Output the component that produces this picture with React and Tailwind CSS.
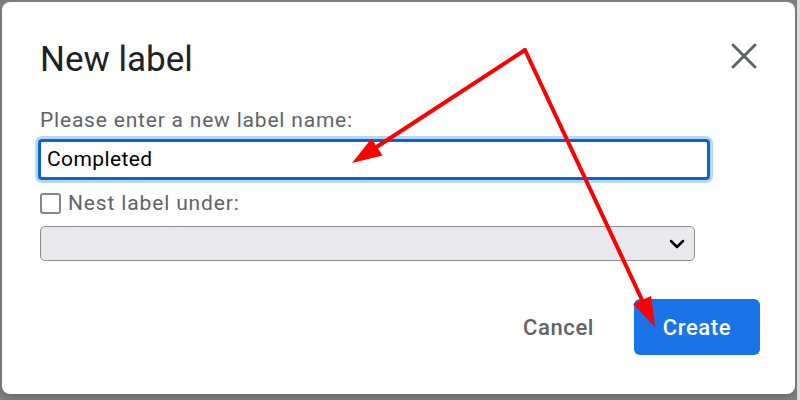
import React from "react";
import { X, ChevronDown } from "lucide-react";

const font = { fontFamily: "Roboto, 'Noto Sans', sans-serif" };

// red annotation arrows drawn over the dialog
const Arrows = () => (
  <svg className="absolute inset-0 pointer-events-none" width="800" height="400" viewBox="0 0 800 400">
    <g stroke="#ff0000" strokeWidth="4" strokeLinecap="round" fill="none">
      <line x1="525" y1="50" x2="375" y2="148" />
      <line x1="525" y1="50" x2="643" y2="302" />
    </g>
    <polygon points="352,163 371.5,138.6 382.5,155.4" fill="#ff0000" />
    <polygon points="655,327 633,304 651,296" fill="#ff0000" />
  </svg>
);

const App = () => {
  return (
    <div className="relative w-[800px] h-[400px] bg-[#7d7d7d] overflow-hidden" style={font}>
      <div className="flex h-full">
        <div className="mt-[2px] ml-[2px] w-[793px] h-[392px] bg-white rounded-lg shadow-md flex flex-col">
          <div className="flex justify-between items-start pl-[38px] pr-[29px] pt-[36px]">
            <h1 className="text-[35px] leading-[44px] text-[#202124]">New label</h1>
            <X className="-mt-[4px] text-[#5f6368]" size={44} strokeWidth={1.6} />
          </div>

          <div className="pl-[38px] mt-[26px] text-[21px] leading-[24px] text-[#5f6368] tracking-[0.8px]">
            Please enter a new label name:
          </div>

          <div className="ml-[33px] mt-[4px] w-[678px] rounded-[7px] border-[3px] border-[#b5d8f8]">
            <div className="h-[41px] rounded-[4px] border-[3px] border-[#0a63d8] flex items-center pl-[6px] text-[21px] text-black tracking-[0.4px]">
              Completed
            </div>
          </div>

          <div className="flex items-center gap-[7px] pl-[38px] mt-[8px]">
            <div className="w-[21px] h-[21px] rounded-[3px] border-[2.5px] border-[#86868e]" />
            <span className="text-[21px] leading-[24px] text-[#5f6368] tracking-[0.85px]">Nest label under:</span>
          </div>

          <div className="ml-[38px] mt-[11px] w-[655px] h-[35px] rounded-[5px] border border-[#8b8b92] bg-[#e9e9ed] flex items-center justify-end pr-[5px]">
            <ChevronDown className="text-black" size={24} strokeWidth={2.5} />
          </div>

          <div className="flex justify-end items-center gap-[40px] pr-[35px] mt-[38px]">
            <span className="text-[22px] font-medium text-[#5f6368] tracking-[0.6px]">Cancel</span>
            <div className="w-[126px] h-[56px] rounded-[6px] bg-[#1a73e8] flex items-center justify-center text-[22px] font-medium text-white tracking-[0.6px]">
              Create
            </div>
          </div>
        </div>
        <div className="ml-[2px] flex-1 bg-[#dcdcdc]" />
      </div>
      <Arrows />
    </div>
  );
};

export default App;
